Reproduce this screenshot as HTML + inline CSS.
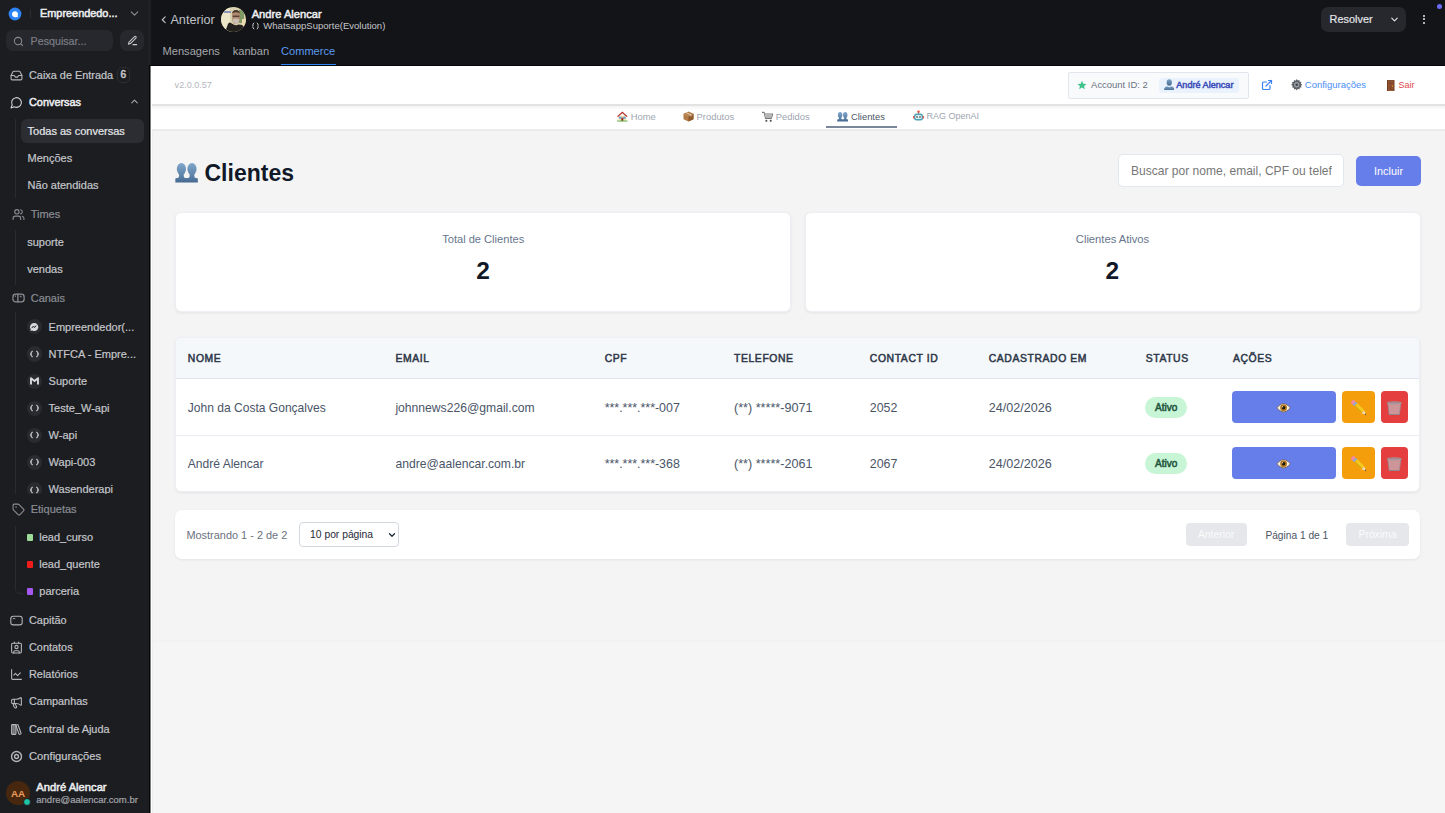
<!DOCTYPE html>
<html><head><meta charset="utf-8">
<style>
*{box-sizing:border-box;margin:0;padding:0}
html,body{width:1445px;height:813px;overflow:hidden;font-family:"Liberation Sans",sans-serif;background:#f3f3f3;position:relative}
.a{position:absolute;white-space:nowrap}
.sb{-webkit-text-stroke:0.2px currentColor}
.sm{-webkit-text-stroke:0.5px currentColor}
svg{display:block}
</style></head><body>
<div class="a" style="left:0px;top:0px;width:150px;height:813px;background:#1c1d20"></div>
<div class="a" style="left:148px;top:0px;width:3px;height:65px;background:#1f2024"></div>
<svg class="a" style="left:8px;top:7px;" width="14" height="14" viewBox="0 0 14 14"><circle cx="7" cy="7" r="6.4" fill="#2b83f6"/><path d="M4 7.2a3 3 0 1 1 5.6 1.5l.4 1.6-1.6-.4A3 3 0 0 1 4 7.2z" fill="#fff"/></svg>
<div class="a" style="left:30px;top:9px;width:1px;height:9px;background:#2c2d31"></div>
<div class="a sm" style="left:40px;top:7.87px;font-size:10.9px;line-height:10.9px;color:#eceef0;font-weight:400;">Empreendedo...</div>
<svg class="a" style="left:128px;top:7px" width="13" height="13" viewBox="0 0 24 24" fill="none" stroke="#8d8f96" stroke-width="2" stroke-linecap="round" stroke-linejoin="round"><path d="m6 9 6 6 6-6"/></svg>
<div class="a" style="left:6px;top:30px;width:107px;height:21px;background:#27282d;border-radius:7px"></div>
<svg class="a" style="left:12.5px;top:35.5px" width="11" height="11" viewBox="0 0 24 24" fill="none" stroke="#8a8c92" stroke-width="2.2" stroke-linecap="round" stroke-linejoin="round"><circle cx="11" cy="11" r="8"/><path d="m21 21-4.3-4.3"/></svg>
<div class="a sb" style="left:30.6px;top:35.54px;font-size:10.7px;line-height:10.7px;color:#7b7d84;font-weight:400;">Pesquisar...</div>
<div class="a" style="left:120px;top:30px;width:24px;height:21px;background:#27282d;border-radius:7px"></div>
<svg class="a" style="left:126.5px;top:34.5px" width="11" height="11" viewBox="0 0 24 24" fill="none" stroke="#c9cacd" stroke-width="2.2" stroke-linecap="round" stroke-linejoin="round"><path d="M13 21h8"/><path d="M16.4 3.6a2.1 2.1 0 0 1 3 3L7.4 18.6 3 20l1.4-4.4z"/></svg>
<svg class="a" style="left:10px;top:68.5px" width="13" height="13" viewBox="0 0 24 24" fill="none" stroke="#b4b6bb" stroke-width="2" stroke-linecap="round" stroke-linejoin="round"><polyline points="22 12 16 12 14 15 10 15 8 12 2 12"/><path d="M5.45 5.11 2 12v6a2 2 0 0 0 2 2h16a2 2 0 0 0 2-2v-6l-3.45-6.89A2 2 0 0 0 16.76 4H7.24a2 2 0 0 0-1.79 1.11z"/></svg>
<div class="a sb" style="left:29px;top:70.07px;font-size:10.9px;line-height:10.9px;color:#c4c6cb;font-weight:400;">Caixa de Entrada</div>
<div class="a" style="left:116.7px;top:67.2px;width:13.499999999999986px;height:16.299999999999997px;border:1px solid #2d2e33;border-radius:5px"></div>
<div class="a sm" style="left:120.6px;top:70.23px;font-size:10px;line-height:10px;color:#c8c9cd;font-weight:400;">6</div>
<svg class="a" style="left:10px;top:96px" width="13" height="13" viewBox="0 0 24 24" fill="none" stroke="#d6d7da" stroke-width="2" stroke-linecap="round" stroke-linejoin="round"><path d="M7.9 20A9 9 0 1 0 4 16.1L2 22Z"/></svg>
<div class="a sm" style="left:29px;top:97.27px;font-size:10.9px;line-height:10.9px;color:#edeef0;font-weight:400;">Conversas</div>
<svg class="a" style="left:129.2px;top:96.2px" width="11" height="11" viewBox="0 0 24 24" fill="none" stroke="#a4a6ab" stroke-width="2.4" stroke-linecap="round" stroke-linejoin="round"><path d="m18 15-6-6-6 6"/></svg>
<div class="a" style="left:15px;top:119px;width:1px;height:79px;background:#2a2b2f"></div>
<div class="a" style="left:21px;top:119px;width:123px;height:24px;background:#2c2d33;border-radius:6px"></div>
<div class="a sb" style="left:27.6px;top:125.69px;font-size:11px;line-height:11px;color:#e6e7ea;font-weight:400;">Todas as conversas</div>
<div class="a sb" style="left:27.6px;top:152.69px;font-size:11px;line-height:11px;color:#c4c6cb;font-weight:400;">Menções</div>
<div class="a sb" style="left:27.6px;top:179.99px;font-size:11px;line-height:11px;color:#c4c6cb;font-weight:400;">Não atendidas</div>
<svg class="a" style="left:11.5px;top:207.5px" width="13" height="13" viewBox="0 0 24 24" fill="none" stroke="#8a8d95" stroke-width="2" stroke-linecap="round" stroke-linejoin="round"><path d="M16 21v-2a4 4 0 0 0-4-4H6a4 4 0 0 0-4 4v2"/><circle cx="9" cy="7" r="4"/><path d="M22 21v-2a4 4 0 0 0-3-3.87"/><path d="M16 3.13a4 4 0 0 1 0 7.75"/></svg>
<div class="a sb" style="left:30.7px;top:208.69px;font-size:11px;line-height:11px;color:#8a8d95;font-weight:400;">Times</div>
<div class="a" style="left:15px;top:230px;width:1px;height:55px;background:#2a2b2f"></div>
<div class="a sb" style="left:27.2px;top:236.89px;font-size:11px;line-height:11px;color:#c4c6cb;font-weight:400;">suporte</div>
<div class="a sb" style="left:27.2px;top:263.89px;font-size:11px;line-height:11px;color:#c4c6cb;font-weight:400;">vendas</div>
<svg class="a" style="left:11.5px;top:292px" width="13" height="13" viewBox="0 0 24 24" fill="none" stroke="#8a8d95" stroke-width="2.3" stroke-linecap="round" stroke-linejoin="round"><rect x="1.8" y="4" width="20.6" height="14.4" rx="5"/><path d="M10.8 4v14.4"/><path d="M15 7.5l2 1.5" stroke-width="2"/><path d="M6.2 7v1.5" stroke-width="1.6"/></svg>
<div class="a sb" style="left:30.7px;top:293.19px;font-size:11px;line-height:11px;color:#8a8d95;font-weight:400;">Canais</div>
<div class="a" style="left:0;top:312px;width:150px;height:182px;overflow:hidden"><div class="a" style="left:15px;top:0px;width:1px;height:182px;background:#2a2b2f"></div>
<div class="a" style="left:26.7px;top:7.30px;width:15.2px;height:15.2px;border-radius:50%;background:#2a2b30"></div><svg class="a" style="left:29.3px;top:9.899999999999977px;" width="10" height="10" viewBox="0 0 10 10"><path d="M5 1a4 4 0 0 0-3.2 6.4L1.5 9l1.7-.6A4 4 0 1 0 5 1z" fill="#d9dadd"/><path d="M2.8 5.8 4.3 4.3l1 .9 1.9-1.4-1.5 1.6-1-.9z" stroke="#2a2b30" stroke-width=".9" fill="none"/></svg>
<div class="a sb" style="left:48.6px;top:9.59px;font-size:11px;line-height:11px;color:#c4c6cb;font-weight:400;">Empreendedor(...</div>
<div class="a" style="left:26.7px;top:34.40px;width:15.2px;height:15.2px;border-radius:50%;background:#2a2b30"></div><svg class="a" style="left:29.8px;top:38.0px;" width="9" height="8" viewBox="0 0 9 8"><path d="M2.6 1 1.2 2.4v1.2L.4 4l.8.4v1.2L2.6 7M6.4 1l1.4 1.4v1.2l.8.4-.8.4v1.2L6.4 7" stroke="#c9cacd" stroke-width="1.1" fill="none"/></svg>
<div class="a sb" style="left:48.6px;top:36.69px;font-size:11px;line-height:11px;color:#c4c6cb;font-weight:400;">NTFCA - Empre...</div>
<div class="a" style="left:26.7px;top:61.50px;width:15.2px;height:15.2px;border-radius:50%;background:#2a2b30"></div><svg class="a" style="left:29.8px;top:65.09999999999997px;" width="9" height="8" viewBox="0 0 9 8"><path d="M1 7.5V1.2L4.5 4 8 1.2v6.3" stroke="#d9dadd" stroke-width="1.9" fill="none" stroke-linejoin="round"/></svg>
<div class="a sb" style="left:48.6px;top:63.79px;font-size:11px;line-height:11px;color:#c4c6cb;font-weight:400;">Suporte</div>
<div class="a" style="left:26.7px;top:88.60px;width:15.2px;height:15.2px;border-radius:50%;background:#2a2b30"></div><svg class="a" style="left:29.8px;top:92.19999999999999px;" width="9" height="8" viewBox="0 0 9 8"><path d="M2.6 1 1.2 2.4v1.2L.4 4l.8.4v1.2L2.6 7M6.4 1l1.4 1.4v1.2l.8.4-.8.4v1.2L6.4 7" stroke="#c9cacd" stroke-width="1.1" fill="none"/></svg>
<div class="a sb" style="left:48.6px;top:90.89px;font-size:11px;line-height:11px;color:#c4c6cb;font-weight:400;">Teste_W-api</div>
<div class="a" style="left:26.7px;top:115.70px;width:15.2px;height:15.2px;border-radius:50%;background:#2a2b30"></div><svg class="a" style="left:29.8px;top:119.29999999999995px;" width="9" height="8" viewBox="0 0 9 8"><path d="M2.6 1 1.2 2.4v1.2L.4 4l.8.4v1.2L2.6 7M6.4 1l1.4 1.4v1.2l.8.4-.8.4v1.2L6.4 7" stroke="#c9cacd" stroke-width="1.1" fill="none"/></svg>
<div class="a sb" style="left:48.6px;top:117.99px;font-size:11px;line-height:11px;color:#c4c6cb;font-weight:400;">W-api</div>
<div class="a" style="left:26.7px;top:142.80px;width:15.2px;height:15.2px;border-radius:50%;background:#2a2b30"></div><svg class="a" style="left:29.8px;top:146.39999999999998px;" width="9" height="8" viewBox="0 0 9 8"><path d="M2.6 1 1.2 2.4v1.2L.4 4l.8.4v1.2L2.6 7M6.4 1l1.4 1.4v1.2l.8.4-.8.4v1.2L6.4 7" stroke="#c9cacd" stroke-width="1.1" fill="none"/></svg>
<div class="a sb" style="left:48.6px;top:145.09px;font-size:11px;line-height:11px;color:#c4c6cb;font-weight:400;">Wapi-003</div>
<div class="a" style="left:26.7px;top:169.90px;width:15.2px;height:15.2px;border-radius:50%;background:#2a2b30"></div><svg class="a" style="left:29.8px;top:173.5px;" width="9" height="8" viewBox="0 0 9 8"><path d="M2.6 1 1.2 2.4v1.2L.4 4l.8.4v1.2L2.6 7M6.4 1l1.4 1.4v1.2l.8.4-.8.4v1.2L6.4 7" stroke="#c9cacd" stroke-width="1.1" fill="none"/></svg>
<div class="a sb" style="left:48.6px;top:172.19px;font-size:11px;line-height:11px;color:#c4c6cb;font-weight:400;">Wasenderapi</div>
</div>
<svg class="a" style="left:11.5px;top:502.5px" width="13" height="13" viewBox="0 0 24 24" fill="none" stroke="#8a8d95" stroke-width="2" stroke-linecap="round" stroke-linejoin="round"><path d="M12.586 2.586A2 2 0 0 0 11.172 2H4a2 2 0 0 0-2 2v7.172a2 2 0 0 0 .586 1.414l8.704 8.704a2.426 2.426 0 0 0 3.42 0l6.58-6.58a2.426 2.426 0 0 0 0-3.42z"/><circle cx="7.5" cy="7.5" r=".5" fill="currentColor"/></svg>
<div class="a sb" style="left:30.7px;top:503.69px;font-size:11px;line-height:11px;color:#8a8d95;font-weight:400;">Etiquetas</div>
<div class="a" style="left:15px;top:526px;width:8px;height:68px;border-left:1px solid #2a2b2f;border-bottom:1px solid #2a2b2f;border-bottom-left-radius:5px"></div>
<div class="a" style="left:26.7px;top:534.4px;width:6.5000000000000036px;height:6.2000000000000455px;background:#9ddc98;border-radius:1px"></div>
<div class="a sb" style="left:39.3px;top:532.09px;font-size:11px;line-height:11px;color:#c4c6cb;font-weight:400;">lead_curso</div>
<div class="a" style="left:26.7px;top:561.4px;width:6.5000000000000036px;height:6.2000000000000455px;background:#ef1c1c;border-radius:1px"></div>
<div class="a sb" style="left:39.3px;top:559.09px;font-size:11px;line-height:11px;color:#c4c6cb;font-weight:400;">lead_quente</div>
<div class="a" style="left:26.7px;top:588.4px;width:6.5000000000000036px;height:6.2000000000000455px;background:#a458f0;border-radius:1px"></div>
<div class="a sb" style="left:39.3px;top:586.09px;font-size:11px;line-height:11px;color:#c4c6cb;font-weight:400;">parceria</div>
<svg class="a" style="left:10px;top:614.0px" width="13" height="13" viewBox="0 0 24 24" fill="none" stroke="#b4b6bb" stroke-width="2" stroke-linecap="round" stroke-linejoin="round"><rect x="1.5" y="4" width="21" height="16" rx="4.5"/><path d="M6 8.5h3" stroke-width="1.6"/></svg>
<div class="a sb" style="left:29px;top:614.77px;font-size:10.9px;line-height:10.9px;color:#c4c6cb;font-weight:400;">Capitão</div>
<svg class="a" style="left:10px;top:641.2px" width="13" height="13" viewBox="0 0 24 24" fill="none" stroke="#b4b6bb" stroke-width="2" stroke-linecap="round" stroke-linejoin="round"><path d="M16 2v2"/><path d="M7 22v-2a2 2 0 0 1 2-2h6a2 2 0 0 1 2 2v2"/><path d="M8 2v2"/><circle cx="12" cy="11" r="3"/><rect x="3" y="4" width="18" height="18" rx="2"/></svg>
<div class="a sb" style="left:29px;top:641.97px;font-size:10.9px;line-height:10.9px;color:#c4c6cb;font-weight:400;">Contatos</div>
<svg class="a" style="left:10px;top:668.4px" width="13" height="13" viewBox="0 0 24 24" fill="none" stroke="#b4b6bb" stroke-width="2" stroke-linecap="round" stroke-linejoin="round"><path d="M3 3v16a2 2 0 0 0 2 2h16"/><path d="m19 9-5 5-4-4-3 3"/></svg>
<div class="a sb" style="left:29px;top:669.17px;font-size:10.9px;line-height:10.9px;color:#c4c6cb;font-weight:400;">Relatórios</div>
<svg class="a" style="left:10px;top:695.6px" width="13" height="13" viewBox="0 0 24 24" fill="none" stroke="#b4b6bb" stroke-width="2" stroke-linecap="round" stroke-linejoin="round"><path d="M11 6a13 13 0 0 0 8.4-2.8A1 1 0 0 1 21 4v12a1 1 0 0 1-1.6.8A13 13 0 0 0 11 14H5a2 2 0 0 1-2-2V8a2 2 0 0 1 2-2z"/><path d="M6 14a12 12 0 0 0 2.4 7.2 2 2 0 0 0 3.2-2.4A8 8 0 0 1 10 14"/><path d="M8 6v8"/></svg>
<div class="a sb" style="left:29px;top:696.37px;font-size:10.9px;line-height:10.9px;color:#c4c6cb;font-weight:400;">Campanhas</div>
<svg class="a" style="left:10px;top:722.8px" width="13" height="13" viewBox="0 0 24 24" fill="none" stroke="#b4b6bb" stroke-width="2" stroke-linecap="round" stroke-linejoin="round"><rect width="8" height="18" x="3" y="3" rx="1" fill="#5d5f64"/><path d="M7 3v18" stroke-width="1"/><path d="M20.4 18.9c.2.5-.1 1.1-.6 1.3l-1.9.7c-.5.2-1.1-.1-1.3-.6L11.1 5.1c-.2-.5.1-1.1.6-1.3l1.9-.7c.5-.2 1.1.1 1.3.6Z"/></svg>
<div class="a sb" style="left:29px;top:723.57px;font-size:10.9px;line-height:10.9px;color:#c4c6cb;font-weight:400;">Central de Ajuda</div>
<svg class="a" style="left:10px;top:750.0px" width="13" height="13" viewBox="0 0 24 24" fill="none" stroke="#b4b6bb" stroke-width="2" stroke-linecap="round" stroke-linejoin="round"><circle cx="12" cy="12" r="9.2" stroke-width="2.6"/><circle cx="12" cy="12" r="3.6" stroke-width="2.6"/></svg>
<div class="a sb" style="left:29px;top:750.52px;font-size:11.2px;line-height:11.2px;color:#c4c6cb;font-weight:400;">Configurações</div>
<div class="a" style="left:6px;top:781.4px;width:24px;height:24px;border-radius:50%;background:#47280f"></div>
<div class="a" style="left:6.0px;width:24px;text-align:center;top:788.70px;font-size:9.8px;line-height:9.8px;color:#f39d5c;font-weight:700;">AA</div>
<div class="a" style="left:22.6px;top:798.1px;width:8.4px;height:8.4px;border-radius:50%;background:#1ec2a4;border:1px solid #1c1d20"></div>
<div class="a sm" style="left:36.3px;top:781.62px;font-size:11.2px;line-height:11.2px;color:#eceef0;font-weight:400;">André Alencar</div>
<div class="a sb" style="left:36.3px;top:794.66px;font-size:9.5px;line-height:9.5px;color:#a2a4aa;font-weight:400;">andre@aalencar.com.br</div>
<div class="a" style="left:151px;top:0px;width:1294px;height:65px;background:#131417"></div>
<svg class="a" style="left:157.6px;top:13.8px" width="11.5" height="11.5" viewBox="0 0 24 24" fill="none" stroke="#bfc1c5" stroke-width="2.4" stroke-linecap="round" stroke-linejoin="round"><path d="m15 18-6-6 6-6"/></svg>
<div class="a " style="left:170.4px;top:14.35px;font-size:12.7px;line-height:12.7px;color:#bfc1c5;font-weight:400;">Anterior</div>
<svg class="a" style="left:221px;top:7px;" width="25" height="25" viewBox="0 0 25 25"><defs><clipPath id="av"><circle cx="12.5" cy="12.5" r="12.4"/></clipPath></defs>
<g clip-path="url(#av)"><rect width="25" height="25" fill="#d9d2b0"/>
<rect x="0" y="0" width="9" height="25" fill="#ece6c8"/><rect x="3" y="4" width="7" height="2" fill="#8a94b8"/><rect x="18" y="3" width="5" height="13" fill="#7f9a62"/><rect x="21" y="12" width="4" height="8" fill="#e8dcb0"/>
<path d="M11.2 6.5Q11.5 3.2 15 3.2T18.8 6.5V12Q18.5 16.5 15 17T11.2 12z" fill="#b08a6c"/>
<path d="M11 7.5Q11 3 15 3T19 7.5L18.6 6Q15 4.4 11.4 6z" fill="#4a3a2e"/>
<path d="M11.8 12.2Q15 11 18.2 12.2Q18 16.6 15 17Q12 16.6 11.8 12.2z" fill="#c9bfb4"/>
<rect x="11.6" y="8.6" width="6.8" height="1.3" fill="#3a302a" opacity=".85"/>
<path d="M4 25L7 17Q8 14.5 10 16L12.5 17.5Q15 19 17.5 17.5L21 18Q24 20 25 25Z" fill="#23211f"/></g></svg>
<div class="a sm" style="left:251.7px;top:8.56px;font-size:11.15px;line-height:11.15px;color:#eceef0;font-weight:400;">Andre Alencar</div>
<svg class="a" style="left:252px;top:22px;" width="7" height="8" viewBox="0 0 7 8"><path d="M2.2.8 1 2v1.4l-.6.6.6.6V6l1.2 1.2M4.8.8 6 2v1.4l.6.6-.6.6V6L4.8 7.2" stroke="#c5c6ca" stroke-width="1" fill="none"/></svg>
<div class="a " style="left:263.3px;top:21.32px;font-size:9.55px;line-height:9.55px;color:#c5c6ca;font-weight:400;">WhatsappSuporte(Evolution)</div>
<div class="a " style="left:162.5px;top:45.60px;font-size:11.1px;line-height:11.1px;color:#a6a8ae;font-weight:400;">Mensagens</div>
<div class="a " style="left:232.7px;top:45.60px;font-size:11.1px;line-height:11.1px;color:#a6a8ae;font-weight:400;">kanban</div>
<div class="a " style="left:281.1px;top:45.65px;font-size:11.05px;line-height:11.05px;color:#5d9bf0;font-weight:400;">Commerce</div>
<div class="a" style="left:281px;top:63.6px;width:55px;height:1.999999999999993px;background:#2f86f6"></div>
<div class="a" style="left:1321px;top:7px;width:85px;height:25px;background:#27282e;border-radius:7px"></div>
<div class="a sb" style="left:1329.6px;top:14.37px;font-size:10.9px;line-height:10.9px;color:#e4e5e8;font-weight:400;">Resolver</div>
<svg class="a" style="left:1388.5px;top:13.5px" width="11" height="11" viewBox="0 0 24 24" fill="none" stroke="#e4e5e8" stroke-width="2.4" stroke-linecap="round" stroke-linejoin="round"><path d="m6 9 6 6 6-6"/></svg>
<div class="a" style="left:1423px;top:14.6px;width:2px;height:2.0000000000000018px;background:#e8e9ec;border-radius:1px"></div>
<div class="a" style="left:1423px;top:18.4px;width:2px;height:2.0px;background:#e8e9ec;border-radius:1px"></div>
<div class="a" style="left:1423px;top:22.2px;width:2px;height:2.0px;background:#e8e9ec;border-radius:1px"></div>
<div class="a" style="left:1436.5px;top:3.5px;width:5.0px;height:5.0px;background:#6b6cf6;border-radius:50%"></div>
<div class="a" style="left:149px;top:65px;width:1296px;height:1px;background:#060708"></div>
<div class="a" style="left:149px;top:65px;width:1px;height:748px;background:#060708"></div>
<div class="a" style="left:150px;top:66px;width:1295px;height:747px;background:#f4f4f4"></div>
<div class="a" style="left:150px;top:66px;width:1295px;height:63px;background:#fff"></div>
<div class="a" style="left:150px;top:66px;width:1px;height:747px;background:#7a7b7c"></div>
<div class="a" style="left:151px;top:66px;width:1px;height:747px;background:#fff"></div>
<div class="a" style="left:152px;top:131px;width:1px;height:682px;background:#ededed"></div>
<div class="a" style="left:152px;top:104px;width:1293px;height:2px;background:#e2e2e2"></div>
<div class="a" style="left:152px;top:106px;width:1293px;height:4px;background:linear-gradient(#f3f3f3,#fff)"></div>
<div class="a" style="left:152px;top:129px;width:1293px;height:2px;background:#ebebeb"></div>
<div class="a" style="left:153px;top:640px;width:1292px;height:173px;background:#f5f5f5"></div>
<div class="a" style="left:153px;top:640px;width:1292px;height:2px;background:#f2f2f2"></div>
<div class="a " style="left:174.6px;top:80.72px;font-size:9.07px;line-height:9.07px;color:#b3b7be;font-weight:400;">v2.0.0.57</div>
<div class="a" style="left:1068px;top:72px;width:181px;height:27px;background:#f8fafc;border:1px solid #e1e6ec;border-radius:2px"></div>
<svg class="a" style="left:1077.3px;top:80.1px;" width="10" height="10" viewBox="0 0 24 24"><path d="M12 1.5l3.1 7.2 7.8.7-5.9 5.2 1.8 7.7L12 18.2l-6.8 4.1 1.8-7.7L1.1 9.4l7.8-.7z" fill="#3cc48a"/></svg>
<div class="a " style="left:1091.1px;top:80.10px;font-size:9.45px;line-height:9.45px;color:#6b7280;font-weight:400;">Account ID: 2</div>
<div class="a" style="left:1159px;top:77.8px;width:79.5px;height:15.200000000000003px;background:#eaf2fd;border-radius:3px"></div>
<svg class="a" style="left:1163.5px;top:78.5px;" width="10.5" height="11.5" viewBox="0 0 21 23"><defs><linearGradient id="pg" x1="0" y1="0" x2="0" y2="1"><stop offset="0" stop-color="#7fa4c8"/><stop offset="1" stop-color="#45698f"/></linearGradient></defs><ellipse cx="10.5" cy="7" rx="5.2" ry="6.5" fill="url(#pg)"/><path d="M0 23q0-7 6-8.5l4.5 2 4.5-2q6 1.5 6 8.5z" fill="url(#pg)"/></svg>
<div class="a sm" style="left:1176.3px;top:81.10px;font-size:9.1px;line-height:9.1px;color:#3b4db8;font-weight:400;">André Alencar</div>
<svg class="a" style="left:1260.5px;top:78.5px" width="12" height="12" viewBox="0 0 24 24" fill="none" stroke="#3b82f6" stroke-width="2.4" stroke-linecap="round" stroke-linejoin="round"><path d="M15 3h6v6"/><path d="M10 14 21 3"/><path d="M18 13v6a2 2 0 0 1-2 2H5a2 2 0 0 1-2-2V8a2 2 0 0 1 2-2h6"/></svg>
<svg class="a" style="left:1290.5px;top:79px;" width="11.5" height="11.5" viewBox="0 0 24 24"><path d="M12 0l2 3.2 3.6-1.2.3 3.8 3.8.3-1.2 3.6L24 12l-3.2 2 1.2 3.6-3.8.3-.3 3.8-3.6-1.2L12 24l-2-3.2-3.6 1.2-.3-3.8-3.8-.3 1.2-3.6L0 12l3.2-2L2 6.4l3.8-.3.3-3.8 3.6 1.2z" fill="#5b5f66"/><circle cx="12" cy="12" r="5.5" fill="#9aa0a6"/><circle cx="12" cy="12" r="2.8" fill="#44474c"/></svg>
<div class="a " style="left:1304.8px;top:80.06px;font-size:9.5px;line-height:9.5px;color:#4a8df5;font-weight:400;">Configurações</div>
<svg class="a" style="left:1387px;top:79.8px;" width="7.5" height="11.2" viewBox="0 0 15 22"><rect x="0" y="0" width="15" height="22" fill="#6e3a1e"/><rect x="2" y="2" width="11" height="20" fill="#9a5a33"/><rect x="3.5" y="3.5" width="8" height="7" fill="#85482a"/><rect x="3.5" y="12" width="8" height="8" fill="#85482a"/><circle cx="11.5" cy="12" r="1.1" fill="#e8c040"/></svg>
<div class="a " style="left:1398.6px;top:80.52px;font-size:8.95px;line-height:8.95px;color:#e0474b;font-weight:400;">Sair</div>
<svg class="a" style="left:617.3px;top:111px;" width="10.7" height="10.5" viewBox="0 0 22 22"><path d="M3 10h16v10H3z" fill="#f3dfb0"/><path d="M0 11 11 1l11 10-2 1.5L11 4.5 2 12.5z" fill="#b8322a"/><rect x="4" y="12" width="5" height="4" fill="#5aa0d8"/><rect x="13" y="12" width="5" height="4" fill="#5aa0d8"/><rect x="9" y="14" width="4" height="7" fill="#8a2a1e"/><rect x="0" y="20" width="22" height="2" fill="#5aa83a"/></svg>
<div class="a " style="left:630.7px;top:112.14px;font-size:9.4px;line-height:9.4px;color:#9ea5b0;font-weight:400;">Home</div>
<svg class="a" style="left:682.8px;top:111px;" width="11" height="11" viewBox="0 0 22 22"><path d="M11 1 21 5.5v11L11 21 1 16.5v-11z" fill="#b27a45"/><path d="M11 10 21 5.5v11L11 21z" fill="#8e5a2c"/><path d="M1 5.5 11 10 21 5.5" stroke="#d8a874" stroke-width="1" fill="none"/><path d="M6 3.2l10 4.5v3" stroke="#e8dcc8" stroke-width="2" fill="none"/></svg>
<div class="a " style="left:696.6px;top:112.14px;font-size:9.4px;line-height:9.4px;color:#9ea5b0;font-weight:400;">Produtos</div>
<svg class="a" style="left:762px;top:110.5px;" width="11.3" height="12" viewBox="0 0 22 22"><path d="M0 2h4l3 12h11l3-9H6" stroke="#777" stroke-width="2" fill="none" stroke-linejoin="round"/><path d="M6 6h14l-2.5 7H8z" fill="#b5b5b5"/><circle cx="8.5" cy="18.5" r="2" fill="#555"/><circle cx="17" cy="18.5" r="2" fill="#555"/></svg>
<div class="a " style="left:775.8px;top:112.14px;font-size:9.4px;line-height:9.4px;color:#9ea5b0;font-weight:400;">Pedidos</div>
<svg class="a" style="left:836.7px;top:112px;" width="11.3" height="9.5" viewBox="0 0 23 20"><defs><linearGradient id="pp836" gradientUnits="userSpaceOnUse" x1="0" y1="0" x2="0" y2="20"><stop offset="0" stop-color="#80a6cb"/><stop offset="0.7" stop-color="#5a7fa6"/><stop offset="1" stop-color="#45688f"/></linearGradient></defs><g fill="url(#pp836)"><ellipse cx="6.2" cy="6.2" rx="4.7" ry="6.2"/><ellipse cx="17" cy="6.2" rx="4.7" ry="6.2"/><path d="M0 20V16.2Q0 15.2 1.5 15.2H2.2Q3.8 15.2 3.8 13.3V10.5H8.6V13.3Q8.6 15.2 10.2 15.2H13Q14.6 15.2 14.6 13.3V10.5H19.4V13.3Q19.4 15.2 21 15.2H21.5Q23 15.2 23 16.2V20Z"/></g></svg>
<div class="a " style="left:851px;top:112.14px;font-size:9.4px;line-height:9.4px;color:#4b5563;font-weight:400;">Clientes</div>
<div class="a" style="left:826px;top:125.7px;width:70.5px;height:1.8999999999999915px;background:#7b879b"></div>
<svg class="a" style="left:913.2px;top:110.3px;" width="11" height="11.5" viewBox="0 0 22 23"><rect x="2" y="7" width="18" height="14" rx="5" fill="#4fa3b8"/><rect x="4.5" y="10" width="13" height="8" rx="3" fill="#d9eef2"/><circle cx="8" cy="14" r="1.6" fill="#333"/><circle cx="14" cy="14" r="1.6" fill="#333"/><circle cx="11" cy="3.5" r="2.5" fill="#e84a3a"/><rect x="10.2" y="5" width="1.6" height="3" fill="#777"/><rect x="0" y="12" width="2.5" height="5" fill="#e8584a"/><rect x="19.5" y="12" width="2.5" height="5" fill="#e8584a"/></svg>
<div class="a " style="left:926.6px;top:112.48px;font-size:9.0px;line-height:9.0px;color:#9ea5b0;font-weight:400;">RAG OpenAI</div>
<svg class="a" style="left:175px;top:163.3px;" width="23.2" height="19.6" viewBox="0 0 23 20"><defs><linearGradient id="pp175" gradientUnits="userSpaceOnUse" x1="0" y1="0" x2="0" y2="20"><stop offset="0" stop-color="#80a6cb"/><stop offset="0.7" stop-color="#5a7fa6"/><stop offset="1" stop-color="#45688f"/></linearGradient></defs><g fill="url(#pp175)"><ellipse cx="6.2" cy="6.2" rx="4.7" ry="6.2"/><ellipse cx="17" cy="6.2" rx="4.7" ry="6.2"/><path d="M0 20V16.2Q0 15.2 1.5 15.2H2.2Q3.8 15.2 3.8 13.3V10.5H8.6V13.3Q8.6 15.2 10.2 15.2H13Q14.6 15.2 14.6 13.3V10.5H19.4V13.3Q19.4 15.2 21 15.2H21.5Q23 15.2 23 16.2V20Z"/></g></svg>
<div class="a " style="left:204.5px;top:161.83px;font-size:23.0px;line-height:23.0px;color:#111827;font-weight:700;">Clientes</div>
<div class="a" style="left:1118.4px;top:154.3px;width:225.19999999999982px;height:32.79999999999998px;background:#fff;border:1px solid #e2e8f0;border-radius:5px"></div>
<div class="a" style="left:1131px;top:160px;width:201px;height:22px;overflow:hidden"><div class="a " style="left:0px;top:4.70px;font-size:12.05px;line-height:12.05px;color:#777777;font-weight:400;">Buscar por nome, email, CPF ou telefone</div>
</div>
<div class="a" style="left:1356.2px;top:155.6px;width:64.89999999999986px;height:30.400000000000006px;background:#667eea;border-radius:5px"></div>
<div class="a " style="left:1374px;top:165.67px;font-size:10.9px;line-height:10.9px;color:#fff;font-weight:400;">Incluir</div>
<div class="a" style="left:175.4px;top:211.6px;width:615.6px;height:100.9px;background:#fff;border-radius:6px;box-shadow:0 1px 3px rgba(0,0,0,.07);border:1px solid #eceff3"></div>
<div class="a" style="left:283.2px;width:400px;text-align:center;top:233.50px;font-size:11.1px;line-height:11.1px;color:#66758c;font-weight:400;">Total de Clientes</div>
<div class="a" style="left:283.1px;width:400px;text-align:center;top:258.76px;font-size:24.5px;line-height:24.5px;color:#111827;font-weight:700;">2</div>
<div class="a" style="left:805px;top:211.6px;width:615.5px;height:100.9px;background:#fff;border-radius:6px;box-shadow:0 1px 3px rgba(0,0,0,.07);border:1px solid #eceff3"></div>
<div class="a" style="left:912.5px;width:400px;text-align:center;top:234.02px;font-size:11.2px;line-height:11.2px;color:#66758c;font-weight:400;">Clientes Ativos</div>
<div class="a" style="left:912.4000000000001px;width:400px;text-align:center;top:258.76px;font-size:24.5px;line-height:24.5px;color:#111827;font-weight:700;">2</div>
<div class="a" style="left:175.2px;top:337.3px;width:1244.5px;height:154.3px;background:#fff;border-radius:6px;box-shadow:0 1px 3px rgba(0,0,0,.07);border:1px solid #eceff3;overflow:hidden"></div>
<div class="a" style="left:176.2px;top:338.3px;width:1242.5px;height:39.69999999999999px;background:#f5f8fb;border-radius:5px 5px 0 0"></div>
<div class="a" style="left:176.2px;top:378px;width:1242.5px;height:1px;background:#dfe5ee"></div>
<div class="a" style="left:176.2px;top:435px;width:1242.5px;height:1px;background:#e9edf2"></div>
<div class="a sm" style="left:187.8px;top:353.60px;font-size:10.4px;line-height:10.4px;color:#2d3748;font-weight:400;letter-spacing:0.6px">NOME</div>
<div class="a sm" style="left:395.4px;top:353.60px;font-size:10.4px;line-height:10.4px;color:#2d3748;font-weight:400;letter-spacing:0.6px">EMAIL</div>
<div class="a sm" style="left:604.7px;top:353.60px;font-size:10.4px;line-height:10.4px;color:#2d3748;font-weight:400;letter-spacing:0.6px">CPF</div>
<div class="a sm" style="left:734px;top:353.60px;font-size:10.4px;line-height:10.4px;color:#2d3748;font-weight:400;letter-spacing:0.6px">TELEFONE</div>
<div class="a sm" style="left:869.8px;top:353.60px;font-size:10.4px;line-height:10.4px;color:#2d3748;font-weight:400;letter-spacing:0.6px">CONTACT ID</div>
<div class="a sm" style="left:988.7px;top:353.60px;font-size:10.4px;line-height:10.4px;color:#2d3748;font-weight:400;letter-spacing:0.6px">CADASTRADO EM</div>
<div class="a sm" style="left:1145.7px;top:353.60px;font-size:10.4px;line-height:10.4px;color:#2d3748;font-weight:400;letter-spacing:0.6px">STATUS</div>
<div class="a sm" style="left:1232.9px;top:353.60px;font-size:10.4px;line-height:10.4px;color:#2d3748;font-weight:400;letter-spacing:0.6px">AÇÕES</div>
<div class="a " style="left:187.8px;top:401.80px;font-size:12.05px;line-height:12.05px;color:#4a5568;font-weight:400;">John da Costa Gonçalves</div>
<div class="a " style="left:395.4px;top:401.72px;font-size:12.15px;line-height:12.15px;color:#4a5568;font-weight:400;">johnnews226@gmail.com</div>
<div class="a " style="left:604.7px;top:401.50px;font-size:12.4px;line-height:12.4px;color:#4a5568;font-weight:400;">***.***.***-007</div>
<div class="a " style="left:734px;top:401.93px;font-size:12.6px;line-height:12.6px;color:#4a5568;font-weight:400;">(**) *****-9071</div>
<div class="a " style="left:869.8px;top:401.50px;font-size:12.4px;line-height:12.4px;color:#4a5568;font-weight:400;">2052</div>
<div class="a " style="left:988.7px;top:401.93px;font-size:12.6px;line-height:12.6px;color:#4a5568;font-weight:400;">24/02/2026</div>
<div class="a" style="left:1145px;top:396.7px;width:42.09999999999991px;height:21.19999999999999px;background:#c8f5d6;border-radius:11px"></div>
<div class="a sm" style="left:1155px;top:402.95px;font-size:10.1px;line-height:10.1px;color:#22543d;font-weight:400;">Ativo</div>
<div class="a" style="left:1231.6px;top:391.4px;width:104.40000000000009px;height:31.80000000000001px;background:#667eea;border-radius:4px"></div>
<svg class="a" style="left:1276.3px;top:402px;" width="15.2" height="11.6" viewBox="0 0 30 23"><path d="M1 11.5Q15-6 29 11.5Q15 29 1 11.5z" fill="#7a5a3a"/><path d="M2.5 11.5Q15-3.5 27.5 11.5Q15 26.5 2.5 11.5z" fill="#f5f0ea"/><circle cx="15" cy="11.5" r="6.8" fill="#b07a22"/><circle cx="15" cy="11.5" r="3.4" fill="#1c140c"/><circle cx="13" cy="9.5" r="1.2" fill="#fff"/></svg>
<div class="a" style="left:1341.9px;top:391.4px;width:33.0px;height:31.80000000000001px;background:#f59e0b;border-radius:4px"></div>
<svg class="a" style="left:1347.5px;top:397px;" width="22.3" height="22.3" viewBox="0 0 24 24"><g transform="rotate(45 12 12)"><rect x="1.2" y="9.7" width="3.6" height="4.6" rx="1.2" fill="#f08aa8"/><rect x="4.4" y="9.7" width="2.6" height="4.6" fill="#8fa8c8"/><rect x="7" y="9.7" width="10.5" height="4.6" fill="#f8c81e"/><rect x="7" y="12.8" width="10.5" height="1.5" fill="#d9a012"/><path d="M17.5 9.7 22.6 12l-5.1 2.3z" fill="#f2d7a6"/><path d="M21 11.3 22.8 12 21 12.7z" fill="#333"/></g></svg>
<div class="a" style="left:1381.1px;top:391.4px;width:27.100000000000136px;height:31.80000000000001px;background:#e53e3e;border-radius:4px"></div>
<svg class="a" style="left:1387.2px;top:400.5px;" width="14.6" height="14.7" viewBox="0 0 29 29"><defs><pattern id="mesh0" width="3" height="3" patternUnits="userSpaceOnUse"><path d="M0 0l3 3M3 0 0 3" stroke="#b9a3a6" stroke-width=".7"/></pattern></defs><path d="M1.5 3.5h26l-3 24h-20z" fill="#dd8a8c"/><path d="M1.5 3.5h26l-3 24h-20z" fill="url(#mesh0)"/><path d="M1.5 3.5h26l-3 24h-20z" fill="none" stroke="#8e8f96" stroke-width="1.4"/><ellipse cx="14.5" cy="3.5" rx="13.5" ry="2.2" fill="none" stroke="#9a9ba2" stroke-width="2"/><path d="M4.5 27.5h20" stroke="#7d7e85" stroke-width="2"/></svg>
<div class="a " style="left:187.8px;top:457.80px;font-size:12.05px;line-height:12.05px;color:#4a5568;font-weight:400;">André Alencar</div>
<div class="a " style="left:395.4px;top:457.72px;font-size:12.15px;line-height:12.15px;color:#4a5568;font-weight:400;">andre@aalencar.com.br</div>
<div class="a " style="left:604.7px;top:457.50px;font-size:12.4px;line-height:12.4px;color:#4a5568;font-weight:400;">***.***.***-368</div>
<div class="a " style="left:734px;top:457.93px;font-size:12.6px;line-height:12.6px;color:#4a5568;font-weight:400;">(**) *****-2061</div>
<div class="a " style="left:869.8px;top:457.50px;font-size:12.4px;line-height:12.4px;color:#4a5568;font-weight:400;">2067</div>
<div class="a " style="left:988.7px;top:457.93px;font-size:12.6px;line-height:12.6px;color:#4a5568;font-weight:400;">24/02/2026</div>
<div class="a" style="left:1145px;top:452.7px;width:42.09999999999991px;height:21.19999999999999px;background:#c8f5d6;border-radius:11px"></div>
<div class="a sm" style="left:1155px;top:458.95px;font-size:10.1px;line-height:10.1px;color:#22543d;font-weight:400;">Ativo</div>
<div class="a" style="left:1231.6px;top:447.4px;width:104.40000000000009px;height:31.80000000000001px;background:#667eea;border-radius:4px"></div>
<svg class="a" style="left:1276.3px;top:458px;" width="15.2" height="11.6" viewBox="0 0 30 23"><path d="M1 11.5Q15-6 29 11.5Q15 29 1 11.5z" fill="#7a5a3a"/><path d="M2.5 11.5Q15-3.5 27.5 11.5Q15 26.5 2.5 11.5z" fill="#f5f0ea"/><circle cx="15" cy="11.5" r="6.8" fill="#b07a22"/><circle cx="15" cy="11.5" r="3.4" fill="#1c140c"/><circle cx="13" cy="9.5" r="1.2" fill="#fff"/></svg>
<div class="a" style="left:1341.9px;top:447.4px;width:33.0px;height:31.80000000000001px;background:#f59e0b;border-radius:4px"></div>
<svg class="a" style="left:1347.5px;top:453px;" width="22.3" height="22.3" viewBox="0 0 24 24"><g transform="rotate(45 12 12)"><rect x="1.2" y="9.7" width="3.6" height="4.6" rx="1.2" fill="#f08aa8"/><rect x="4.4" y="9.7" width="2.6" height="4.6" fill="#8fa8c8"/><rect x="7" y="9.7" width="10.5" height="4.6" fill="#f8c81e"/><rect x="7" y="12.8" width="10.5" height="1.5" fill="#d9a012"/><path d="M17.5 9.7 22.6 12l-5.1 2.3z" fill="#f2d7a6"/><path d="M21 11.3 22.8 12 21 12.7z" fill="#333"/></g></svg>
<div class="a" style="left:1381.1px;top:447.4px;width:27.100000000000136px;height:31.80000000000001px;background:#e53e3e;border-radius:4px"></div>
<svg class="a" style="left:1387.2px;top:456.5px;" width="14.6" height="14.7" viewBox="0 0 29 29"><defs><pattern id="mesh1" width="3" height="3" patternUnits="userSpaceOnUse"><path d="M0 0l3 3M3 0 0 3" stroke="#b9a3a6" stroke-width=".7"/></pattern></defs><path d="M1.5 3.5h26l-3 24h-20z" fill="#dd8a8c"/><path d="M1.5 3.5h26l-3 24h-20z" fill="url(#mesh1)"/><path d="M1.5 3.5h26l-3 24h-20z" fill="none" stroke="#8e8f96" stroke-width="1.4"/><ellipse cx="14.5" cy="3.5" rx="13.5" ry="2.2" fill="none" stroke="#9a9ba2" stroke-width="2"/><path d="M4.5 27.5h20" stroke="#7d7e85" stroke-width="2"/></svg>
<div class="a" style="left:174.8px;top:510.4px;width:1245.7px;height:48.30000000000007px;background:#fff;border-radius:7px;box-shadow:0 1px 3px rgba(0,0,0,.07)"></div>
<div class="a " style="left:186.4px;top:530.13px;font-size:10.95px;line-height:10.95px;color:#6b7280;font-weight:400;">Mostrando 1 - 2 de 2</div>
<div class="a" style="left:299.4px;top:522.1px;width:99.30000000000001px;height:24.600000000000023px;background:#fff;border:1px solid #d3d8df;border-radius:4px"></div>
<div class="a " style="left:310.1px;top:529.88px;font-size:10.3px;line-height:10.3px;color:#1f2937;font-weight:400;">10 por página</div>
<svg class="a" style="left:386.5px;top:529.5px" width="10" height="10" viewBox="0 0 24 24" fill="none" stroke="#1f2937" stroke-width="3" stroke-linecap="round" stroke-linejoin="round"><path d="m6 9 6 6 6-6"/></svg>
<div class="a" style="left:1186.2px;top:522.6px;width:60.799999999999955px;height:23.799999999999955px;background:#e5e7eb;border-radius:4px"></div>
<div class="a " style="left:1197.9px;top:529.50px;font-size:10.4px;line-height:10.4px;color:#fbfbfc;font-weight:400;">Anterior</div>
<div class="a " style="left:1265.4px;top:530.57px;font-size:10.2px;line-height:10.2px;color:#4b5563;font-weight:400;">Página 1 de 1</div>
<div class="a" style="left:1346.3px;top:522.6px;width:62.5px;height:23.799999999999955px;background:#e5e7eb;border-radius:4px"></div>
<div class="a " style="left:1358.6px;top:529.58px;font-size:10.3px;line-height:10.3px;color:#fbfbfc;font-weight:400;">Próxima</div>
</body></html>
